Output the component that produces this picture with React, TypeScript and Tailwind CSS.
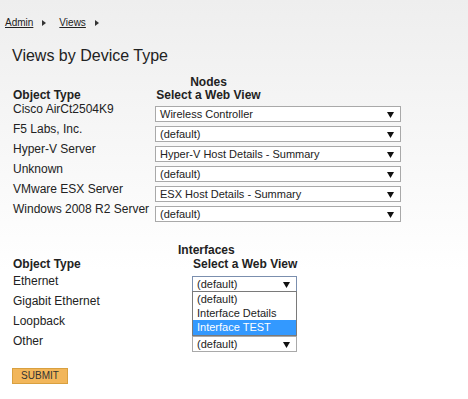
import React from "react";

const Arrow = () => (
  <svg width="7" height="6" viewBox="0 0 7 6" className="absolute right-[6px] top-[5px]">
    <polygon points="0,0 7,0 3.5,6" fill="#111" />
  </svg>
);

function Select({ value, width, focus }: { value: string; width: string; focus?: boolean }) {
  return (
    <div
      className={`relative h-[16px] ${width} border ${
        focus ? "border-[#7b8fae]" : "border-[#a9a9a9]"
      } bg-white pl-[4px] text-[11px] leading-[14px] text-[#222] whitespace-nowrap`}
    >
      {value}
      <Arrow />
    </div>
  );
}

const nodes: [string, string][] = [
  ["Cisco AirCt2504K9", "Wireless Controller"],
  ["F5 Labs, Inc.", "(default)"],
  ["Hyper-V Server", "Hyper-V Host Details - Summary"],
  ["Unknown", "(default)"],
  ["VMware ESX Server", "ESX Host Details - Summary"],
  ["Windows 2008 R2 Server", "(default)"],
];

const ifaces = ["Ethernet", "Gigabit Ethernet", "Loopback", "Other"];

function Crumb({ children }: { children: React.ReactNode }) {
  return (
    <span className="flex items-center">
      <span className="underline">{children}</span>
      <svg width="4" height="6" viewBox="0 0 4 6" className="ml-[9px] mr-[13px]">
        <polygon points="0,0 4,3 0,6" fill="#333" />
      </svg>
    </span>
  );
}

export default function App() {
  return (
    <div className="min-h-[399px] w-full bg-[linear-gradient(to_bottom,#eeeeee_0px,#ffffff_270px)] pt-[17px] font-['Liberation_Sans',Arial,sans-serif] text-[#222]">
      <div className="flex pl-[5px] text-[10px] leading-[12px] text-[#222]">
        <Crumb>Admin</Crumb>
        <Crumb>Views</Crumb>
      </div>

      <h1 className="mt-[18px] pl-[12px] text-[16px] leading-[18px] text-[#222]">Views by Device Type</h1>

      {/* Nodes */}
      <div className="mt-[10px] pl-[13px]">
        <div className="flex text-[12px] font-bold">
          <div className="flex w-[142px] flex-col">
            <div className="h-[14px]" />
            <div className="leading-[12px]">Object Type</div>
          </div>
          <div className="ml-[1px] w-[105px] text-center">
            <div className="leading-[14px]">Nodes</div>
            <div className="leading-[12px] whitespace-nowrap">Select a Web View</div>
          </div>
        </div>
        {nodes.map(([label, value]) => (
          <div key={label} className="flex h-[20px]">
            <div className="w-[142px] text-[12px] leading-[16px] whitespace-nowrap">{label}</div>
            <div className="mt-[5px]">
              <Select value={value} width="w-[246px]" />
            </div>
          </div>
        ))}
      </div>

      {/* Interfaces */}
      <div className="mt-[22px] pl-[13px]">
        <div className="flex text-[12px] font-bold">
          <div className="flex w-[179px] flex-col">
            <div className="h-[14px]" />
            <div className="leading-[14px]">Object Type</div>
          </div>
          <div className="flex flex-col">
            <div className="-ml-[14px] leading-[14px]">Interfaces</div>
            <div className="ml-[1px] leading-[14px] whitespace-nowrap">Select a Web View</div>
          </div>
        </div>
        <div className="relative mt-[2px]">
          {ifaces.map((label, i) => (
            <div key={label} className="flex h-[20px]">
              <div className="w-[179px] text-[12px] leading-[16px] whitespace-nowrap">{label}</div>
              <div className="relative mt-[3px]">
                <Select value={i === 1 || i === 2 ? "" : "(default)"} width="w-[105px]" focus={i === 0} />
                {i === 0 && (
                  <div className="absolute left-0 top-[15px] z-10 w-[105px] border border-[#7a7a7a] bg-white text-[11px] text-[#222]">
                    <div className="h-[14px] pl-[4px] leading-[14px]">(default)</div>
                    <div className="h-[14px] pl-[4px] leading-[14px]">Interface Details</div>
                    <div className="h-[15px] bg-[#3399ff] pl-[4px] leading-[15px] text-white">Interface TEST</div>
                  </div>
                )}
              </div>
            </div>
          ))}
        </div>
      </div>

      <div className="mt-[15px] flex pl-[12px]">
        <button className="block h-[16px] w-[56px] border border-[#d9a03f] bg-[#f2b65a] text-[10px] leading-[14px] text-[#333]">
          SUBMIT
        </button>
      </div>
    </div>
  );
}
